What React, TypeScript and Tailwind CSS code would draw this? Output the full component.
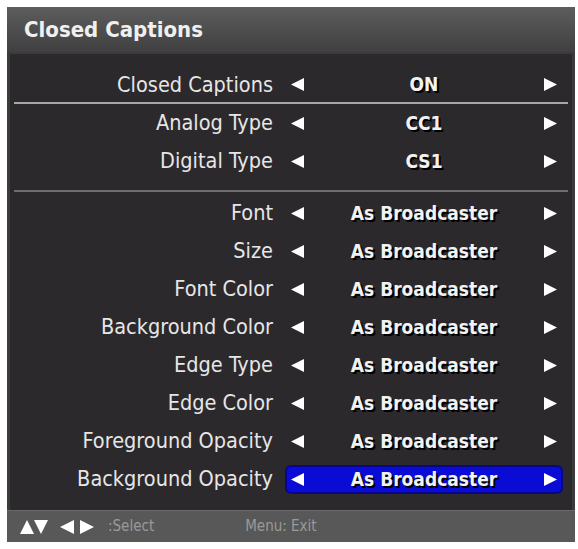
import React from "react";

const FONT = { fontFamily: '"DejaVu Sans Condensed", "DejaVu Sans", sans-serif' };

const rows: { label: string; value: string }[] = [
  { label: "Font", value: "As Broadcaster" },
  { label: "Size", value: "As Broadcaster" },
  { label: "Font Color", value: "As Broadcaster" },
  { label: "Background Color", value: "As Broadcaster" },
  { label: "Edge Type", value: "As Broadcaster" },
  { label: "Edge Color", value: "As Broadcaster" },
  { label: "Foreground Opacity", value: "As Broadcaster" },
  { label: "Background Opacity", value: "As Broadcaster" },
];

function Tri({ dir, className = "" }: { dir: "left" | "right" | "up" | "down"; className?: string }) {
  const pts = {
    left: "12,0 12,12 0,6",
    right: "0,0 0,12 12,6",
    up: "6,0 12,12 0,12",
    down: "0,0 12,0 6,12",
  }[dir];
  return (
    <svg viewBox="0 0 12 12" className={`shrink-0 ${className}`}>
      <polygon points={pts} fill="currentColor" />
    </svg>
  );
}

function Row({ label, value, active, h = "h-[38px]" }: { label: string; value: string; active?: boolean; h?: string }) {
  return (
    <div className={`flex items-center ${h}`}>
      <div className="w-[263px] text-right text-[21.5px] text-[#e6e6e6] leading-none">{label}</div>
      <div
        className={`ml-[12px] flex items-center justify-between w-[278px] h-[29px] px-[4px] rounded-[6px] border-2 ${
          active ? "bg-[#0b0bd6] border-[#06068a]" : "border-transparent"
        }`}
      >
        <Tri dir="left" className="w-[13px] h-[13px] text-white" />
        <span className="font-bold text-[19px] text-[#f2f2f2] leading-none [text-shadow:2px_2px_0_#000]">{value}</span>
        <Tri dir="right" className="w-[13px] h-[13px] text-white" />
      </div>
    </div>
  );
}

export default function App() {
  return (
    <div className="w-[578px] h-[549px] bg-white pt-[7px] pl-[7px]" style={FONT}>
      <div className="w-[568px] h-[535px] bg-[#3c3a3c] flex flex-col">
        <div className="h-[45px] flex items-center pl-[17px] bg-gradient-to-b from-[#5d5d5d] to-[#404040]">
          <span className="text-[22px] font-bold text-[#f0f0f0] leading-none">Closed Captions</span>
        </div>
        <div className="mt-[2px] mx-[3px] h-[456px] bg-[#2c292d] pt-[13px]">
          <Row label="Closed Captions" value="ON" h="h-[35px]" />
          <div className="mx-[4px] h-[2px] bg-[#a8a8a8]" />
          <Row label="Analog Type" value="CC1" />
          <Row label="Digital Type" value="CS1" />
          <div className="mt-[10px] mb-[2px] mx-[4px] h-[2px] bg-[#6e6c6e]" />
          {rows.map((r, i) => (
            <Row key={r.label} label={r.label} value={r.value} active={i === rows.length - 1} />
          ))}
        </div>
        <div className="flex-1 bg-[#585858] border-t border-[#6a6a6a] flex items-center pl-[13px] text-[15px] text-[#9a9a9a]">
          <Tri dir="up" className="w-[14px] h-[14px] text-white" />
          <Tri dir="down" className="w-[14px] h-[14px] text-white" />
          <Tri dir="left" className="ml-[12px] w-[14px] h-[14px] text-white" />
          <Tri dir="right" className="ml-[6px] w-[14px] h-[14px] text-white" />
          <span className="ml-[14px]">:Select</span>
          <span className="ml-[91px]">Menu: Exit</span>
        </div>
      </div>
    </div>
  );
}
